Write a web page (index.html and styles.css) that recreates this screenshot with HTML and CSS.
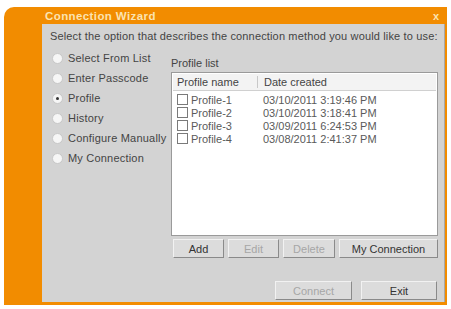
FILE: index.html
```html
<!DOCTYPE html>
<html>
<head>
    <title>Connection Wizard</title>
    <link rel="stylesheet" href="styles.css">
</head>
<body>
    <div class="window">
        <div class="titlebar">
            <span class="title">Connection Wizard</span>
            <span class="close">x</span>
        </div>
        <div class="frame">
            <div class="strip"></div>
            <div class="panel">
                <p class="intro">Select the option that describes the connection method you would like to use:</p>
                <div class="columns">
                    <ul class="options">
                        <li><span class="radio"></span>Select From List</li>
                        <li><span class="radio"></span>Enter Passcode</li>
                        <li><span class="radio checked"></span>Profile</li>
                        <li><span class="radio"></span>History</li>
                        <li><span class="radio"></span>Configure Manually</li>
                        <li><span class="radio"></span>My Connection</li>
                    </ul>
                    <div class="profiles">
                        <div class="label">Profile list</div>
                        <div class="listbox">
                            <div class="list-head">
                                <span class="col-name">Profile name</span>
                                <span class="col-date">Date created</span>
                            </div>
                            <div class="row"><span class="col-name"><span class="check"></span>Profile-1</span><span class="col-date">03/10/2011 3:19:46 PM</span></div>
                            <div class="row"><span class="col-name"><span class="check"></span>Profile-2</span><span class="col-date">03/10/2011 3:18:41 PM</span></div>
                            <div class="row"><span class="col-name"><span class="check"></span>Profile-3</span><span class="col-date">03/09/2011 6:24:53 PM</span></div>
                            <div class="row"><span class="col-name"><span class="check"></span>Profile-4</span><span class="col-date">03/08/2011 2:41:37 PM</span></div>
                        </div>
                        <div class="list-buttons">
                            <button class="btn btn-add">Add</button>
                            <button class="btn btn-edit" disabled>Edit</button>
                            <button class="btn btn-delete" disabled>Delete</button>
                            <button class="btn btn-mine">My Connection</button>
                        </div>
                    </div>
                </div>
                <div class="footer">
                    <button class="btn btn-connect" disabled>Connect</button>
                    <button class="btn btn-exit">Exit</button>
                </div>
            </div>
        </div>
    </div>
</body>
</html>
```

FILE: styles.css
```css
body { margin: 0; background: #fff; font-family: "Liberation Sans", Arial, sans-serif; font-size: 11px; color: #444; }
.window {
    margin: 7px 0 0 4px;
    width: 443px;
    height: 298px;
    background: #f28c00;
    border-radius: 10px 0 0 0;
    display: flex;
    flex-direction: column;
    box-sizing: border-box;
    padding: 0 2px 3px 0;
}
.titlebar {
    height: 17px;
    display: flex;
    align-items: center;
    justify-content: space-between;
    padding: 0 6px 0 41px;
}
.title { color: #fbe3b0; font-weight: bold; font-size: 11.5px; letter-spacing: 0.4px; }
.close { color: #fbe3b0; font-weight: bold; font-size: 11px; }
.frame { flex: 1; display: flex; }
.strip { width: 38px; }
.panel {
    flex: 1;
    min-width: 0;
    background: #d3d3d3;
    border-right: 1px solid #a8a8a8;
    padding: 6px 6px 0 8px;
    display: flex;
    flex-direction: column;
}
.intro { margin: 0; line-height: 13px; letter-spacing: 0.15px; white-space: nowrap; }
.columns { display: flex; margin-top: 5px; }
.options { list-style: none; margin: 0; padding: 0; width: 123px; }
.options li { height: 20px; display: flex; align-items: center; letter-spacing: 0.2px; white-space: nowrap; }
.radio {
    width: 9px;
    height: 9px;
    border-radius: 50%;
    background: #f6f6f6;
    border: 1px solid #c8c8c8;
    margin: 0 5px 0 2px;
    position: relative;
}
.radio.checked::after {
    content: "";
    position: absolute;
    left: 3px;
    top: 3px;
    width: 3px;
    height: 3px;
    border-radius: 50%;
    background: #333;
}
.profiles { width: 267px; padding-top: 9px; }
.label { line-height: 13px; }
.listbox {
    margin-top: 2px;
    height: 164px;
    box-sizing: border-box;
    background: #fff;
    border: 1px solid #9a9a9a;
    padding: 1px;
    color: #5a5a5a;
}
.list-head {
    display: flex;
    height: 16px;
    align-items: center;
    background: #f3f3f3;
    border-bottom: 1px solid #d0d0d0;
    color: #444;
    margin-bottom: 2px;
}
.list-head .col-name { border-right: 1px solid #c8c8c8; }
.col-name { width: 80px; padding-left: 4px; display: flex; align-items: center; }
.col-date { padding-left: 6px; }
.row { display: flex; height: 13px; align-items: center; }
.check {
    width: 9px;
    height: 9px;
    border: 1px solid #7a7a7a;
    background: #fff;
    margin-right: 3px;
}
.list-buttons { display: flex; gap: 4px; margin-top: 3px; padding-left: 2px; }
.btn {
    font: inherit;
    height: 19px;
    padding: 0;
    background: #dcdcdc;
    color: #333;
    border: 1px solid;
    border-color: #f2f2f2 #8a8a8a #8a8a8a #f2f2f2;
}
.btn:disabled { color: #a6a6a6; }
.btn-add { width: 51px; }
.btn-edit { width: 51px; }
.btn-delete { width: 52px; }
.btn-mine { width: 99px; }
.footer { display: flex; justify-content: flex-end; gap: 9px; margin-top: 23px; padding-right: 1px; }
.btn-connect { width: 77px; }
.btn-exit { width: 76px; }
```
